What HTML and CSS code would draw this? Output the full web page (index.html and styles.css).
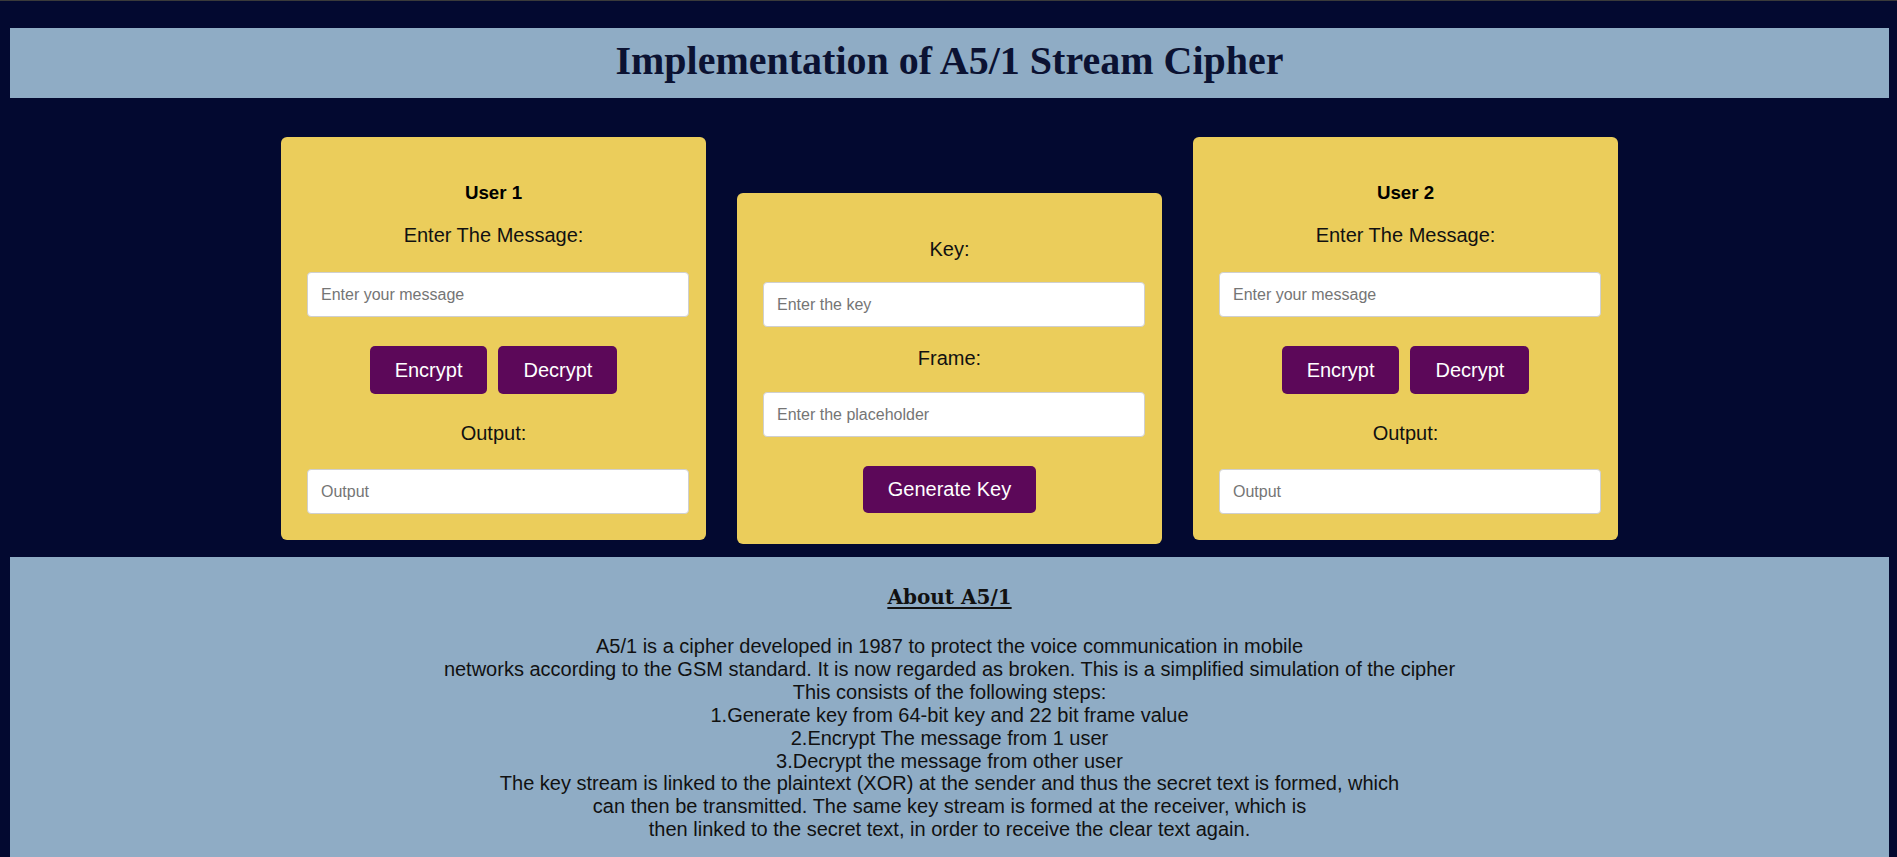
FILE: index.html
```html
<!DOCTYPE html>
<html lang="en">
<head>
<meta charset="utf-8">
<title>A5/1 Stream Cipher</title>
<link rel="stylesheet" href="styles.css">
</head>
<body>
<div class="page">
  <header class="banner">
    <h1 class="title">Implementation of A5/1 Stream Cipher</h1>
  </header>

  <main class="panels">
    <section class="card card-user">
      <h3 class="card-head">User 1</h3>
      <p class="label label-first">Enter The Message:</p>
      <input class="field" type="text" placeholder="Enter your message">
      <div class="actions">
        <button class="btn">Encrypt</button>
        <button class="btn">Decrypt</button>
      </div>
      <p class="label label-out">Output:</p>
      <input class="field" type="text" placeholder="Output">
    </section>

    <section class="card card-key">
      <p class="label label-key">Key:</p>
      <input class="field" type="text" placeholder="Enter the key">
      <p class="label label-frame">Frame:</p>
      <input class="field" type="text" placeholder="Enter the placeholder">
      <div class="actions actions-key">
        <button class="btn">Generate Key</button>
      </div>
    </section>

    <section class="card card-user">
      <h3 class="card-head">User 2</h3>
      <p class="label label-first">Enter The Message:</p>
      <input class="field" type="text" placeholder="Enter your message">
      <div class="actions">
        <button class="btn">Encrypt</button>
        <button class="btn">Decrypt</button>
      </div>
      <p class="label label-out">Output:</p>
      <input class="field" type="text" placeholder="Output">
    </section>
  </main>

  <section class="about">
    <h2 class="about-head">About A5/1</h2>
    <p class="about-text">A5/1 is a cipher developed in 1987 to protect the voice communication in mobile<br>networks according to the GSM standard. It is now regarded as broken. This is a simplified simulation of the cipher<br>This consists of the following steps:<br>1.Generate key from 64-bit key and 22 bit frame value<br>2.Encrypt The message from 1 user<br>3.Decrypt the message from other user<br>The key stream is linked to the plaintext (XOR) at the sender and thus the secret text is formed, which<br>can then be transmitted. The same key stream is formed at the receiver, which is<br>then linked to the secret text, in order to receive the clear text again.</p>
  </section>
</div>
</body>
</html>
```

FILE: styles.css
```css
html, body {
  margin: 0;
  padding: 0;
}

body {
  background: #030930;
  border-top: 1px solid #3a3a3a;
  font-family: "Liberation Sans", Arial, sans-serif;
  color: #111;
}

.page {
  margin: 0 8px 0 10px;
  padding-top: 27px;
}

.banner {
  background: #8facc5;
  height: 70px;
  box-sizing: border-box;
  padding-top: 10px;
  text-align: center;
}

.title {
  margin: 0;
  font-family: "Liberation Serif", "Times New Roman", serif;
  font-weight: bold;
  font-size: 40px;
  line-height: 46px;
  color: #0b1232;
}

.panels {
  display: flex;
  justify-content: center;
  align-items: flex-start;
  gap: 31px;
  padding-top: 39px;
}

.card {
  width: 425px;
  box-sizing: border-box;
  background: #ebcd5b;
  border-radius: 6px;
  text-align: center;
  padding: 0 0 26px 0;
}

.card-key {
  margin-top: 56px;
  padding-bottom: 31px;
}

.card-head {
  margin: 45px 0 0 0;
  font-size: 18.72px;
  font-weight: bold;
  line-height: 21px;
  color: #000;
}

.label {
  margin: 0;
  font-size: 20px;
  line-height: 23px;
  color: #111;
}

.label-first { margin-top: 21px; margin-bottom: 25px; }
.label-out { margin-top: 28px; margin-bottom: 24px; }
.label-key { margin-top: 45px; margin-bottom: 21px; }
.label-frame { margin-top: 20px; margin-bottom: 22px; }

.field {
  display: block;
  width: 382px;
  height: 45px;
  box-sizing: border-box;
  margin: 0 0 0 26px;
  padding: 0 13px;
  border: 1px solid #cfcfcf;
  border-radius: 4px;
  background: #fff;
  font-family: "Liberation Sans", Arial, sans-serif;
  font-size: 16px;
  color: #222;
  outline: none;
}

.field::placeholder {
  color: #757575;
}

.actions {
  display: flex;
  justify-content: center;
  gap: 11px;
  margin-top: 29px;
}

.actions-key {
  margin-top: 29px;
}

.btn {
  height: 48px;
  padding: 0 25px;
  border: none;
  border-radius: 5px;
  background: #5c0859;
  color: #fff;
  font-family: "Liberation Sans", Arial, sans-serif;
  font-size: 20px;
  line-height: 23px;
  cursor: pointer;
}

.actions-key .btn {
  height: 47px;
}

.about {
  margin-top: 13px;
  background: #8facc5;
  padding: 28px 0 30px;
  text-align: center;
}

.about-head {
  margin: 0;
  font-family: "DejaVu Serif", Georgia, serif;
  font-weight: bold;
  font-size: 20px;
  line-height: 25px;
  text-decoration: underline;
  text-underline-offset: 3px;
  color: #111;
}

.about-text {
  margin: 25px 0 0 0;
  font-size: 20px;
  line-height: 22.9px;
  color: #111;
}
```
